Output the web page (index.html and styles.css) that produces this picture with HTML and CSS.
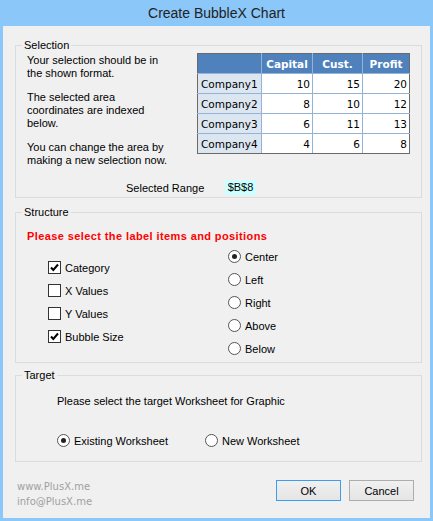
FILE: index.html
```html
<!DOCTYPE html>
<html lang="en">
<head>
<meta charset="UTF-8">
<title>Create BubbleX Chart</title>
<link rel="stylesheet" href="styles.css">
</head>
<body>
<div class="window">
  <div class="titlebar">Create BubbleX Chart</div>
  <div class="client">

    <fieldset class="group group-selection">
      <legend>Selection</legend>
      <div class="sel-top">
        <div class="sel-text">
          <p>Your selection should be in<br>the shown format.</p>
          <p>The selected area<br>coordinates are indexed<br>below.</p>
          <p>You can change the area by<br>making a new selection now.</p>
        </div>
        <table class="sample">
          <tr>
            <th class="col-name"></th>
            <th class="col-capital">Capital</th>
            <th class="col-cust">Cust.</th>
            <th class="col-profit">Profit</th>
          </tr>
          <tr><td class="name">Company1</td><td>10</td><td>15</td><td>20</td></tr>
          <tr><td class="name">Company2</td><td>8</td><td>10</td><td>12</td></tr>
          <tr><td class="name">Company3</td><td>6</td><td>11</td><td>13</td></tr>
          <tr><td class="name">Company4</td><td>4</td><td>6</td><td>8</td></tr>
        </table>
      </div>
      <div class="range">
        <span class="range-label">Selected Range</span>
        <span class="range-value">$B$8</span>
      </div>
    </fieldset>

    <fieldset class="group group-structure">
      <legend>Structure</legend>
      <div class="warning">Please select the label items and positions</div>
      <div class="options">
        <div class="checks">
          <div class="opt"><span class="check on"><svg width="11" height="11" viewBox="0 0 11 11"><path d="M2 5.5 L4.3 8 L9 2.5" fill="none" stroke="#000" stroke-width="2"/></svg></span>Category</div>
          <div class="opt"><span class="check"></span>X Values</div>
          <div class="opt"><span class="check"></span>Y Values</div>
          <div class="opt"><span class="check on"><svg width="11" height="11" viewBox="0 0 11 11"><path d="M2 5.5 L4.3 8 L9 2.5" fill="none" stroke="#000" stroke-width="2"/></svg></span>Bubble Size</div>
        </div>
        <div class="radios">
          <div class="opt"><span class="radio on"></span>Center</div>
          <div class="opt"><span class="radio"></span>Left</div>
          <div class="opt"><span class="radio"></span>Right</div>
          <div class="opt opt-shift"><span class="radio"></span>Above</div>
          <div class="opt"><span class="radio"></span>Below</div>
        </div>
      </div>
    </fieldset>

    <fieldset class="group group-target">
      <legend>Target</legend>
      <div class="target-text">Please select the target Worksheet for Graphic</div>
      <div class="target-opts">
        <div class="opt opt-existing"><span class="radio on"></span>Existing Worksheet</div>
        <div class="opt"><span class="radio"></span>New Worksheet</div>
      </div>
    </fieldset>

    <div class="footer">
      <div class="links">
        <div>www.PlusX.me</div>
        <div>info@PlusX.me</div>
      </div>
      <div class="buttons">
        <button class="btn btn-default">OK</button>
        <button class="btn">Cancel</button>
      </div>
    </div>

  </div>
</div>
</body>
</html>
```

FILE: styles.css
```css
body {
  margin: 0;
  font-family: "Liberation Sans", Arial, sans-serif;
  font-size: 11px;
  color: #000;
  background: #8bc7f8;
}
.window {
  width: 433px;
  height: 521px;
  background: #8bc7f8;
}
.titlebar {
  height: 26px;
  line-height: 27px;
  text-align: center;
  font-size: 14px;
  color: #222;
}
.client {
  margin: 0 3px;
  height: 492px;
  background: #f0f0f0;
  padding-top: 12px;
  box-sizing: border-box;
}
.group {
  margin: 0 8px 0 12px;
  padding: 0 0 0 6px;
  border: 1px solid #dcdcdc;
  min-width: 0;
}
.group legend {
  padding: 0 2px;
  line-height: 14px;
  font-size: 11px;
}
.group-selection {
  padding-bottom: 2px;
}
.group-structure {
  margin-top: 7px;
  padding-bottom: 7px;
}
.group-target {
  margin-top: 5px;
  padding-bottom: 14px;
}

/* selection */
.sel-top {
  display: flex;
  align-items: flex-start;
  margin-top: 1px;
  padding-left: 5px;
}
.sel-text {
  width: 170px;
  flex-shrink: 0;
  padding-top: 1px;
  line-height: 13px;
}
.sel-text p {
  margin: 0;
}
.sel-text p + p {
  margin-top: 11px;
}
.sample {
  width: 213px;
  table-layout: fixed;
  border-collapse: collapse;
  font-family: "DejaVu Sans", Verdana, sans-serif;
  font-size: 10.5px;
  line-height: 12px;
}
.sample tr {
  height: 20px;
}
.sample th,
.sample td {
  border: 1px solid #95b3d7;
  padding: 0 2px;
  box-sizing: border-box;
}
.sample th {
  background: #4f81bd;
  color: #fff;
  font-weight: bold;
  text-align: center;
}
.sample tr:first-child th {
  border-top-color: #6a6a6a;
}
.sample tr:last-child td {
  border-bottom-color: #6a6a6a;
}
.sample th:first-child,
.sample td:first-child {
  border-left-color: #6a6a6a;
}
.sample th:last-child,
.sample td:last-child {
  border-right-color: #6a6a6a;
}
.sample td {
  background: #fff;
  text-align: right;
}
.sample td.name {
  background: #dce6f1;
  text-align: left;
  padding-left: 3px;
}
.col-name { width: 64px; }
.col-capital { width: 51px; }
.col-cust { width: 50px; }

.range {
  display: flex;
  align-items: center;
  margin-top: 13px;
  padding-left: 104px;
}
.range-label {
  width: 99px;
}
.range-value {
  background: #ccffff;
  height: 15px;
  line-height: 15px;
  width: 31px;
  text-align: center;
}

/* structure */
.warning {
  margin-top: 10px;
  padding-left: 5px;
  line-height: 14px;
  color: #ff0000;
  font-weight: bold;
  font-size: 11px;
  letter-spacing: 0.4px;
}
.options {
  display: flex;
  padding-left: 26px;
}
.checks {
  width: 180px;
  margin-top: 18px;
}
.radios {
  margin-top: 7px;
}
.opt {
  display: flex;
  align-items: center;
  height: 13px;
  margin-bottom: 10px;
}
.opt:last-child {
  margin-bottom: 0;
}
.opt-shift {
  margin-top: 2px;
}
.check,
.radio {
  width: 13px;
  height: 13px;
  box-sizing: border-box;
  border: 1px solid #333;
  background: #fff;
  margin-right: 4px;
  display: flex;
  align-items: center;
  justify-content: center;
  flex-shrink: 0;
}
.radio {
  border-radius: 50%;
  border-color: #555;
}
.radio.on::after {
  content: "";
  width: 5px;
  height: 5px;
  border-radius: 50%;
  background: #222;
}

/* target */
.target-text {
  margin-top: 12px;
  padding-left: 35px;
  line-height: 14px;
}
.target-opts {
  display: flex;
  margin-top: 26px;
  padding-left: 35px;
}
.target-opts .opt {
  margin-bottom: 0;
}
.opt-existing {
  width: 148px;
}

/* footer */
.footer {
  display: flex;
  justify-content: space-between;
  align-items: flex-start;
  margin-top: 14px;
  padding: 0 16px 0 14px;
}
.links {
  margin-top: 3px;
  font-family: "DejaVu Sans", Verdana, sans-serif;
  font-size: 10px;
  line-height: 15px;
  color: #a0a0a0;
}
.buttons {
  display: flex;
  gap: 8px;
  margin-top: 4px;
}
.btn {
  width: 65px;
  height: 21px;
  padding: 0;
  font-family: "Liberation Sans", Arial, sans-serif;
  font-size: 11px;
  color: #000;
  border: 1px solid #adadad;
  background: linear-gradient(#f0f0f0, #e5e5e5);
}
.btn-default {
  border-color: #3c9cf0;
}
```
